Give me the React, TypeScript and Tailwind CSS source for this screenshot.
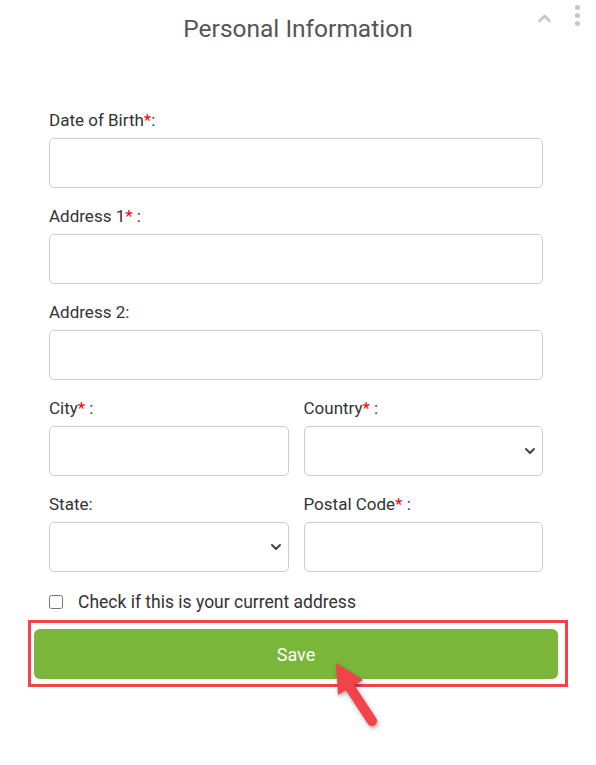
import React from 'react';

const Label = ({ text, required, spaced }: { text: string; required?: boolean; spaced?: boolean }) => (
    <label className="block h-[24px] leading-[24px] mb-[6px] text-[17px] text-[#333]">
        {text}
        {required && <span className="text-[#ff0000]">*</span>}
        {spaced ? ' :' : ':'}
    </label>
);

const TextInput = () => (
    <input type="text" className="block w-full h-[50px] rounded-[5px] border border-[#cccccc] bg-white px-3 outline-none" />
);

const SelectInput = () => (
    <div className="relative">
        <select className="block w-full h-[50px] rounded-[5px] border border-[#cccccc] bg-white px-3 outline-none appearance-none">
            <option></option>
        </select>
        <svg className="absolute right-[7px] top-1/2 -translate-y-1/2 w-[12px] h-[12px] pointer-events-none" viewBox="0 0 12 12">
            <path d="M2 4 L6 8 L10 4" fill="none" stroke="#444" strokeWidth="2" strokeLinecap="round" strokeLinejoin="round" />
        </svg>
    </div>
);

const App: React.FC = () => {
    return (
        <div className="relative w-[596px] h-[765px] bg-white overflow-hidden" style={{ fontFamily: 'Roboto, "Liberation Sans", sans-serif' }}>
            {/* header */}
            <div className="relative h-[58px] flex items-center justify-center">
                <h2 className="text-[24.5px] text-[#555] leading-none mt-[1px]">Personal Information</h2>
                <svg className="absolute left-[537px] top-[12px] w-[15px] h-[12px]" viewBox="0 0 15 12">
                    <path d="M2.5 9 L7.5 4 L12.5 9" fill="none" stroke="#c8c8c8" strokeWidth="2.6" strokeLinecap="round" strokeLinejoin="round" />
                </svg>
                <div className="absolute left-[575px] top-[5px] flex flex-col gap-[3px]">
                    <span className="block w-[5px] h-[5px] rounded-full bg-[#c6c6c6]" />
                    <span className="block w-[5px] h-[5px] rounded-full bg-[#c6c6c6]" />
                    <span className="block w-[5px] h-[5px] rounded-full bg-[#c6c6c6]" />
                </div>
            </div>

            <form className="pl-[49px] pr-[53px] pt-[50px]" onSubmit={e => e.preventDefault()}>
                <div>
                    <Label text="Date of Birth" required />
                    <TextInput />
                </div>
                <div className="mt-4">
                    <Label text="Address 1" required spaced />
                    <TextInput />
                </div>
                <div className="mt-4">
                    <Label text="Address 2" />
                    <TextInput />
                </div>
                <div className="mt-4 grid grid-cols-2 gap-x-[15px]">
                    <div>
                        <Label text="City" required spaced />
                        <TextInput />
                    </div>
                    <div>
                        <Label text="Country" required spaced />
                        <SelectInput />
                    </div>
                </div>
                <div className="mt-4 grid grid-cols-2 gap-x-[15px]">
                    <div>
                        <Label text="State" />
                        <SelectInput />
                    </div>
                    <div>
                        <Label text="Postal Code" required spaced />
                        <TextInput />
                    </div>
                </div>
                <label className="mt-[17px] flex items-center h-[26px] text-[17.5px] text-[#333]">
                    <input type="checkbox" className="w-[14px] h-[14px] mr-[15px]" />
                    Check if this is your current address
                </label>
            </form>

            <div className="ml-[28px] mt-[5px] w-[540px] border-[3px] border-[#f2434a] pl-[3px] pr-[7px] pt-[6px] pb-[5px]">
                <button className="w-full h-[50px] rounded-[6px] bg-[#79b63a] text-white text-[18px] font-normal">Save</button>
            </div>

            {/* pointer arrow */}
            <svg className="absolute left-[325px] top-[650px] w-[60px] h-[85px] pointer-events-none" viewBox="0 0 60 85" style={{ filter: 'drop-shadow(1px 2px 2px rgba(0,0,0,0.35))' }}>
                <path d="M11 13 L38 30 L13 45 Z" fill="#f2434a" />
                <path d="M24 36 L47 71" stroke="#f2434a" strokeWidth="10" strokeLinecap="round" />
            </svg>
        </div>
    );
};

export default App;
